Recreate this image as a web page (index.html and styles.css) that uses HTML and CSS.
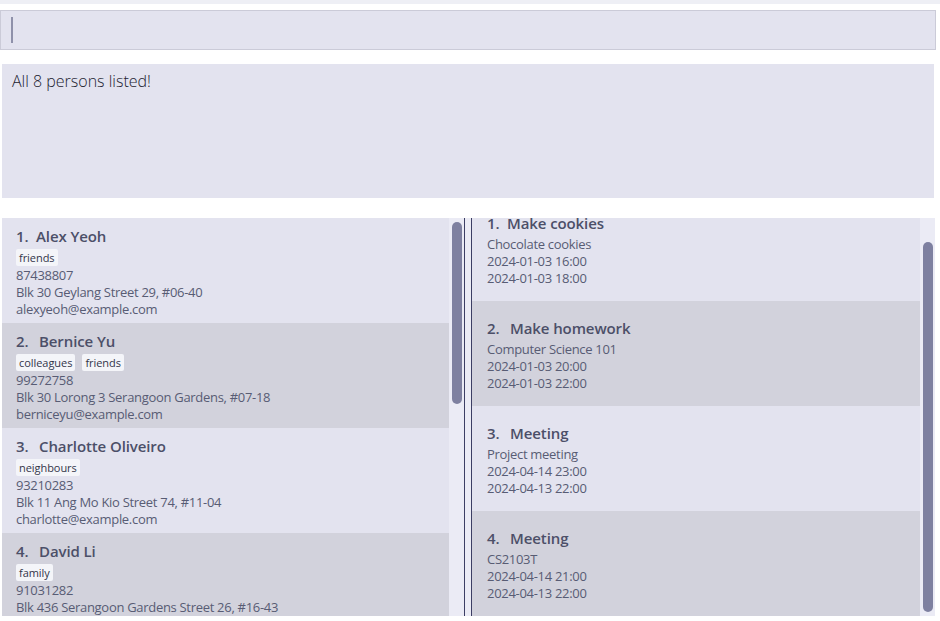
FILE: index.html
```html
<!DOCTYPE html>
<html>
<head>
<meta charset="utf-8">
<link rel="stylesheet" href="styles.css">
</head>
<body>
<div class="topbar"></div>
<div class="command"><span class="caret"></span></div>
<div class="result">All 8 persons listed!</div>
<div class="lists">
  <div class="panel panel-left">
    <div class="list">
      <div class="person odd">
        <div class="title"><span class="idx idx-one">1.</span>Alex Yeoh</div>
        <div class="tags"><span class="tag">friends</span></div>
        <div class="line">87438807</div>
        <div class="line">Blk 30 Geylang Street 29, #06-40</div>
        <div class="line">alexyeoh@example.com</div>
      </div>
      <div class="person even">
        <div class="title"><span class="idx">2.</span>Bernice Yu</div>
        <div class="tags"><span class="tag">colleagues</span><span class="tag">friends</span></div>
        <div class="line">99272758</div>
        <div class="line">Blk 30 Lorong 3 Serangoon Gardens, #07-18</div>
        <div class="line">berniceyu@example.com</div>
      </div>
      <div class="person odd">
        <div class="title"><span class="idx">3.</span>Charlotte Oliveiro</div>
        <div class="tags"><span class="tag">neighbours</span></div>
        <div class="line">93210283</div>
        <div class="line">Blk 11 Ang Mo Kio Street 74, #11-04</div>
        <div class="line">charlotte@example.com</div>
      </div>
      <div class="person even">
        <div class="title"><span class="idx">4.</span>David Li</div>
        <div class="tags"><span class="tag">family</span></div>
        <div class="line">91031282</div>
        <div class="line">Blk 436 Serangoon Gardens Street 26, #16-43</div>
        <div class="line">lidavid@example.com</div>
      </div>
    </div>
    <div class="track"><div class="thumb thumb-left"></div></div>
  </div>
  <div class="divider"></div>
  <div class="panel panel-right">
    <div class="list">
      <div class="scrolled">
        <div class="task odd">
          <div class="title"><span class="idx idx-one">1.</span>Make cookies</div>
          <div class="line">Chocolate cookies</div>
          <div class="line">2024-01-03 16:00</div>
          <div class="line">2024-01-03 18:00</div>
        </div>
        <div class="task even">
          <div class="title"><span class="idx">2.</span>Make homework</div>
          <div class="line">Computer Science 101</div>
          <div class="line">2024-01-03 20:00</div>
          <div class="line">2024-01-03 22:00</div>
        </div>
        <div class="task odd">
          <div class="title"><span class="idx">3.</span>Meeting</div>
          <div class="line">Project meeting</div>
          <div class="line">2024-04-14 23:00</div>
          <div class="line">2024-04-13 22:00</div>
        </div>
        <div class="task even">
          <div class="title"><span class="idx">4.</span>Meeting</div>
          <div class="line">CS2103T</div>
          <div class="line">2024-04-14 21:00</div>
          <div class="line">2024-04-13 22:00</div>
        </div>
      </div>
    </div>
    <div class="track"><div class="thumb thumb-right"></div></div>
  </div>
</div>
</body>
</html>
```
FILE: styles.css
```css
html, body {
  margin: 0;
  padding: 0;
  background: #ffffff;
  font-family: "Open Sans", "Noto Sans", sans-serif;
  width: 940px;
  height: 621px;
  overflow: hidden;
}

.topbar {
  height: 4px;
  background: #eeeff5;
}

.command {
  margin-top: 6px;
  width: 936px;
  height: 40px;
  box-sizing: border-box;
  background: #e3e3ef;
  border: 1px solid #cbcbd8;
  display: flex;
  align-items: center;
  padding-left: 10px;
}

.caret {
  width: 2px;
  height: 26px;
  background: #8f91aa;
}

.result {
  margin: 14px 6px 0 2px;
  height: 134px;
  box-sizing: border-box;
  background: #e3e3ef;
  padding: 6px 10px;
  font-size: 16px;
  font-weight: 300;
  color: #222230;
  letter-spacing: 0;
}

.lists {
  margin-top: 20px;
  height: 398px;
  padding-left: 2px;
  display: flex;
}

.panel {
  display: flex;
  height: 100%;
}

.panel-left .list {
  width: 447px;
}

.panel-right .list {
  width: 448px;
}

.list {
  height: 100%;
  overflow: hidden;
}

.scrolled {
  margin-top: -22px;
}

.track {
  width: 15px;
  height: 100%;
  background: #ebebf5;
  position: relative;
}

.thumb {
  position: absolute;
  left: 3px;
  width: 10px;
  background: #7e80a0;
  border-radius: 5px;
}

.thumb-left {
  top: 4px;
  height: 182px;
}

.thumb-right {
  top: 24px;
  height: 370px;
}

.divider {
  width: 6px;
  height: 100%;
  background: #ebebf5;
  border-left: 1px solid #3c3e64;
  border-right: 1px solid #3c3e64;
}

.odd {
  background: #e3e3ef;
}

.even {
  background: #d2d2dc;
}

.person {
  height: 105px;
  box-sizing: border-box;
  padding: 8px 14px 0 14px;
}

.task {
  height: 105px;
  box-sizing: border-box;
  padding: 16px 15px 0 15px;
}

.title {
  font-size: 15px;
  font-weight: 600;
  color: #4c4f68;
  line-height: 20px;
  white-space: nowrap;
  letter-spacing: -0.1px;
}

.task .title {
  line-height: 22px;
  margin-bottom: 1.5px;
}

.idx {
  display: inline-block;
  width: 23px;
}

.idx-one {
  width: 20px;
}

.tags {
  display: flex;
  gap: 7px;
  margin-top: 3px;
  height: 17px;
  margin-bottom: 0.5px;
}

.tag {
  background: #f4f5f9;
  border-radius: 2px;
  font-size: 11px;
  line-height: 17px;
  padding: 0 3px;
  color: #33364a;
  letter-spacing: -0.05px;
}

.line {
  font-size: 13px;
  line-height: 17px;
  color: #585c74;
  white-space: nowrap;
  letter-spacing: -0.3px;
}
```
